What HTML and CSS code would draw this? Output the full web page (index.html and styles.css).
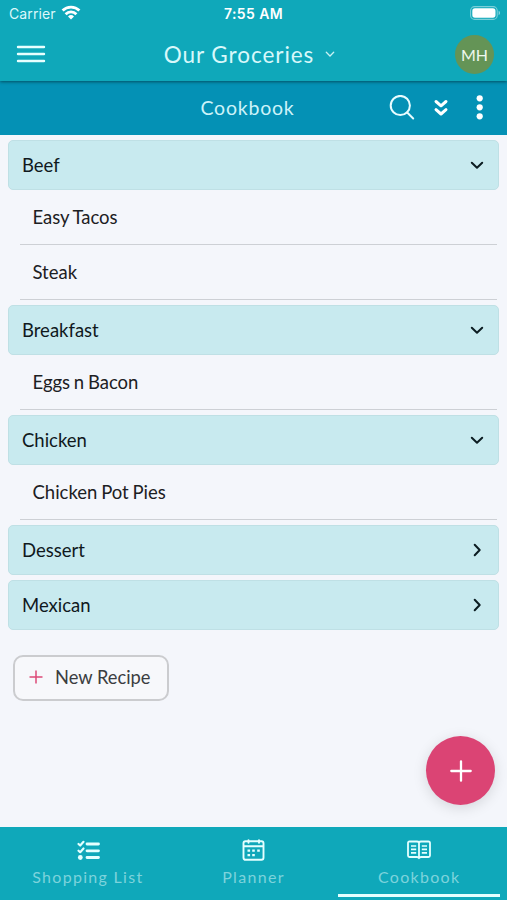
FILE: index.html
```
<!DOCTYPE html>
<html lang="en">
<head>
    <meta charset="UTF-8">
    <meta name="viewport" content="width=device-width, initial-scale=1.0">
    <title>Our Groceries - Cookbook</title>
    <link rel="stylesheet" href="styles.css">
</head>
<body>
    <header class="header">
        <div class="status-bar">
            <div class="carrier">
                <span>Carrier</span>
                <svg class="wifi" width="20" height="15" viewBox="0 0 20 15" fill="none" stroke="#fff" stroke-width="2.8">
                    <path d="M1.6 5.6a12 12 0 0 1 16.8 0"/>
                    <path d="M4.6 9.2a7.6 7.6 0 0 1 10.8 0"/>
                    <path d="M10 14.5l-3-3a4.3 4.3 0 0 1 6 0z" fill="#fff" stroke="none"/>
                </svg>
            </div>
            <span class="clock">7:55 AM</span>
            <svg class="battery" width="31" height="14" viewBox="0 0 31 14">
                <rect x=".6" y=".6" width="26.6" height="12.8" rx="4" fill="none" stroke="#fff" stroke-opacity=".45" stroke-width="1.1"/>
                <rect x="2.3" y="2.3" width="23.2" height="9.4" rx="2.6" fill="#fff"/>
                <path d="M28.6 4.8c1.9.7 1.9 3.7 0 4.4z" fill="#fff" fill-opacity=".5"/>
            </svg>
        </div>
        <nav class="navbar">
            <svg class="menu" width="30" height="20" viewBox="0 0 30 20" stroke="#e8ffff" stroke-width="2.4" stroke-linecap="round">
                <path d="M2 3h26M2 10h26M2 17h26"/>
            </svg>
            <div class="title">
                <span>Our Groceries</span>
                <svg width="10" height="8" viewBox="0 0 10 8" fill="none" stroke="#c8f2f4" stroke-width="1.3" stroke-linecap="round">
                    <path d="M1.3 2.3L5 6l3.7-3.7"/>
                </svg>
            </div>
            <div class="avatar">MH</div>
        </nav>
    </header>

    <div class="toolbar">
        <h1>Cookbook</h1>
        <div class="tools">
            <svg width="26" height="26" viewBox="0 0 26 26" fill="none" stroke="#e8fcff" stroke-width="2" stroke-linecap="round">
                <circle cx="11.3" cy="10.5" r="9.6"/>
                <path d="M18.2 17.5l6 6"/>
            </svg>
            <svg class="expand" width="16" height="18" viewBox="0 0 16 18" fill="none" stroke="#fff" stroke-width="3" stroke-linecap="round" stroke-linejoin="round">
                <path d="M3 2.5l5 4.3 5-4.3M3 10.7l5 4.3 5-4.3"/>
            </svg>
            <svg width="8" height="26" viewBox="0 0 8 26" fill="#fff">
                <circle cx="3.7" cy="3.3" r="3.1"/>
                <circle cx="3.7" cy="12.3" r="3.1"/>
                <circle cx="3.7" cy="21.3" r="3.1"/>
            </svg>
        </div>
    </div>

    <main class="content">
        <section class="group">
            <div class="category">Beef
                <svg class="arrow" viewBox="0 0 14 14"><path d="M1.8 4.8L7 9.8l5.2-5"/></svg>
            </div>
            <div class="recipe">Easy Tacos</div>
            <div class="recipe">Steak</div>
        </section>
        <section class="group">
            <div class="category">Breakfast
                <svg class="arrow" viewBox="0 0 14 14"><path d="M1.8 4.8L7 9.8l5.2-5"/></svg>
            </div>
            <div class="recipe">Eggs n Bacon</div>
        </section>
        <section class="group">
            <div class="category">Chicken
                <svg class="arrow" viewBox="0 0 14 14"><path d="M1.8 4.8L7 9.8l5.2-5"/></svg>
            </div>
            <div class="recipe">Chicken Pot Pies</div>
        </section>
        <section class="group">
            <div class="category">Dessert
                <svg class="arrow" viewBox="0 0 14 14"><path d="M4.7 1.8l5 5.2-5 5.2"/></svg>
            </div>
        </section>
        <section class="group">
            <div class="category">Mexican
                <svg class="arrow" viewBox="0 0 14 14"><path d="M4.7 1.8l5 5.2-5 5.2"/></svg>
            </div>
        </section>

        <button class="new-recipe">
            <svg width="14" height="14" viewBox="0 0 14 14" stroke="#dd4a78" stroke-width="1.5">
                <path d="M7 .5v13M.5 7h13"/>
            </svg>
            <span>New Recipe</span>
        </button>
    </main>

    <button class="fab" aria-label="Add">
        <svg width="22" height="22" viewBox="0 0 22 22" stroke="#fff" stroke-width="2.3" stroke-linecap="round">
            <path d="M11 1.3v19.4M1.3 11h19.4"/>
        </svg>
    </button>

    <footer class="tabs">
        <a class="tab">
            <svg width="24" height="22" viewBox="0 0 24 22" fill="none" stroke="#e4ffff" stroke-linecap="round" stroke-linejoin="round">
                <path d="M11 5h11.5M11 11.8h11.5M11 18.5h11.5" stroke-width="2.8"/>
                <path d="M2.5 5l1.7 1.5 3.3-3.7M2.5 11.7l1.7 1.5 3.3-3.7" stroke-width="2.2"/>
                <circle cx="4.3" cy="18.5" r="2.4" fill="#e4ffff" stroke="none"/>
            </svg>
            <span>Shopping List</span>
        </a>
        <a class="tab">
            <svg width="24" height="22" viewBox="0 0 24 22" fill="none" stroke="#e4ffff" stroke-width="1.9" stroke-linecap="round">
                <rect x="1.5" y="2.2" width="20" height="18.6" rx="2"/>
                <path d="M2 7.2h19M6.5 1.1v2.6M17 1.1v2.6"/>
                <path d="M10.2 11.7h2.6M15.2 11.7h2.6M5.5 11.7h2.6M5.5 16.2h2.6M10.2 16.2h2.6" stroke-width="2.2" stroke-linecap="butt"/>
            </svg>
            <span>Planner</span>
        </a>
        <a class="tab active">
            <svg width="24" height="22" viewBox="0 0 24 22" fill="none" stroke="#e4ffff" stroke-width="1.8" stroke-linejoin="round">
                <path d="M12 3.5c-.4-.7-1-1-2-1H2.5Q1 2.5 1 4v12.5Q1 18 2.5 18H10c1 0 1.6.3 2 1.2.4-.9 1-1.2 2-1.2h7.500q1.500 0 1.500-1.500V4q0-1.500-1.500-1.500H14c-1 0-1.600.3-2 1zv15.500"/>
                <path d="M4 7h5.2M4 10.4h5.2M4 13.8h5.2M14.8 7H20M14.8 10.4H20M14.8 13.8H20" stroke-width="1.7"/>
            </svg>
            <span>Cookbook</span>
        </a>
    </footer>
</body>
</html>
```
FILE: styles.css
```
:root {
    --primary-color: #0fa8ba;
    --bar-color: #0491b5;
    --accent-color: #db4474;
    --category-color: #c8eaef;
}
* {
    box-sizing: border-box;
}
body {
    font-family: Lato, "Liberation Sans", sans-serif;
    margin: 0;
    height: 900px;
    display: flex;
    flex-direction: column;
    background-color: #f4f6fb;
    color: #1c2023;
    overflow: hidden;
}
svg {
    display: block;
    flex: none;
}
.header {
    height: 81px;
    background-color: var(--primary-color);
    color: #fff;
    box-shadow: 0 1px 3px rgba(0, 0, 0, 0.45);
    z-index: 2;
}
.status-bar {
    display: grid;
    grid-template-columns: 1fr auto 1fr;
    align-items: center;
    height: 27px;
    padding: 0 6px 0 9px;
    font-family: Inter, "Liberation Sans", sans-serif;
    font-size: 14px;
}
.carrier {
    display: flex;
    align-items: center;
    gap: 5px;
    color: #dcf8fa;
    letter-spacing: 0.1px;
}
.wifi {
    margin-top: -2px;
}
.clock {
    margin-right: 3px;
    font-weight: 600;
    letter-spacing: 0.4px;
}
.battery {
    justify-self: end;
    margin-top: -1px;
}
.navbar {
    display: grid;
    grid-template-columns: 1fr auto 1fr;
    align-items: center;
    height: 54px;
    padding: 0 13px 0 16px;
}
.title {
    display: flex;
    align-items: center;
    gap: 11px;
    margin-right: 11px;
    font-size: 22.5px;
    letter-spacing: 0.95px;
    color: #d8f8fa;
}
.avatar {
    justify-self: end;
    width: 39px;
    height: 39px;
    border-radius: 50%;
    background-color: #649456;
    color: #eef8ee;
    font-size: 16px;
    line-height: 39px;
    text-align: center;
}
.toolbar {
    display: grid;
    grid-template-columns: 1fr auto 1fr;
    align-items: center;
    height: 54px;
    padding: 0 23px 0 11px;
    background-color: var(--bar-color);
}
.toolbar h1 {
    grid-column: 2;
    margin: -2px 0 0;
    font-size: 19.5px;
    font-weight: 400;
    letter-spacing: 0.8px;
    color: #cdf3f9;
}
.tools {
    justify-self: end;
    display: flex;
    align-items: center;
}
.expand {
    margin: 0 27px 0 18px;
}
.content {
    flex: 1;
    padding: 5px 8px;
    font-size: 18.5px;
    word-spacing: -1px;
}
.group {
    margin-bottom: 5px;
}
.category {
    display: flex;
    align-items: center;
    justify-content: space-between;
    height: 50px;
    padding: 0 14px 0 13px;
    background-color: var(--category-color);
    border: 1px solid #bfe0e5;
    border-radius: 5px;
    color: #10191d;
}
.arrow {
    width: 14px;
    height: 14px;
    fill: none;
    stroke: #0c1d22;
    stroke-width: 2;
    stroke-linecap: round;
    stroke-linejoin: round;
}
.recipe {
    height: 55px;
    margin: 0 2px 0 12px;
    padding-left: 12.5px;
    line-height: 55px;
    border-bottom: 1px solid #cdd0d5;
}
.new-recipe {
    display: flex;
    align-items: center;
    gap: 12px;
    width: 156px;
    height: 46px;
    margin: 25px 0 0 5px;
    padding: 0 0 2px 14px;
    background-color: #f7f8fb;
    border: 2px solid #cbcccf;
    border-radius: 10px;
    font-family: inherit;
    font-size: 18.3px;
    color: #3b3d41;
}
.fab {
    position: absolute;
    right: 12px;
    bottom: 95px;
    display: flex;
    align-items: center;
    justify-content: center;
    width: 69px;
    height: 69px;
    padding: 0;
    border: none;
    border-radius: 50%;
    background-color: var(--accent-color);
    box-shadow: 0 3px 14px rgba(0, 0, 0, 0.13);
}
.tabs {
    display: flex;
    height: 73px;
    padding: 0 5px;
    background-color: var(--primary-color);
}
.tab {
    flex: 1;
    display: flex;
    flex-direction: column;
    align-items: center;
    gap: 5px;
    margin: 0 2px;
    padding-top: 12px;
    height: 70px;
    font-size: 16px;
    line-height: 22px;
    letter-spacing: 1.3px;
    color: #7dd3dc;
}
.tab.active {
    border-bottom: 3px solid #e4ffff;
}
```
